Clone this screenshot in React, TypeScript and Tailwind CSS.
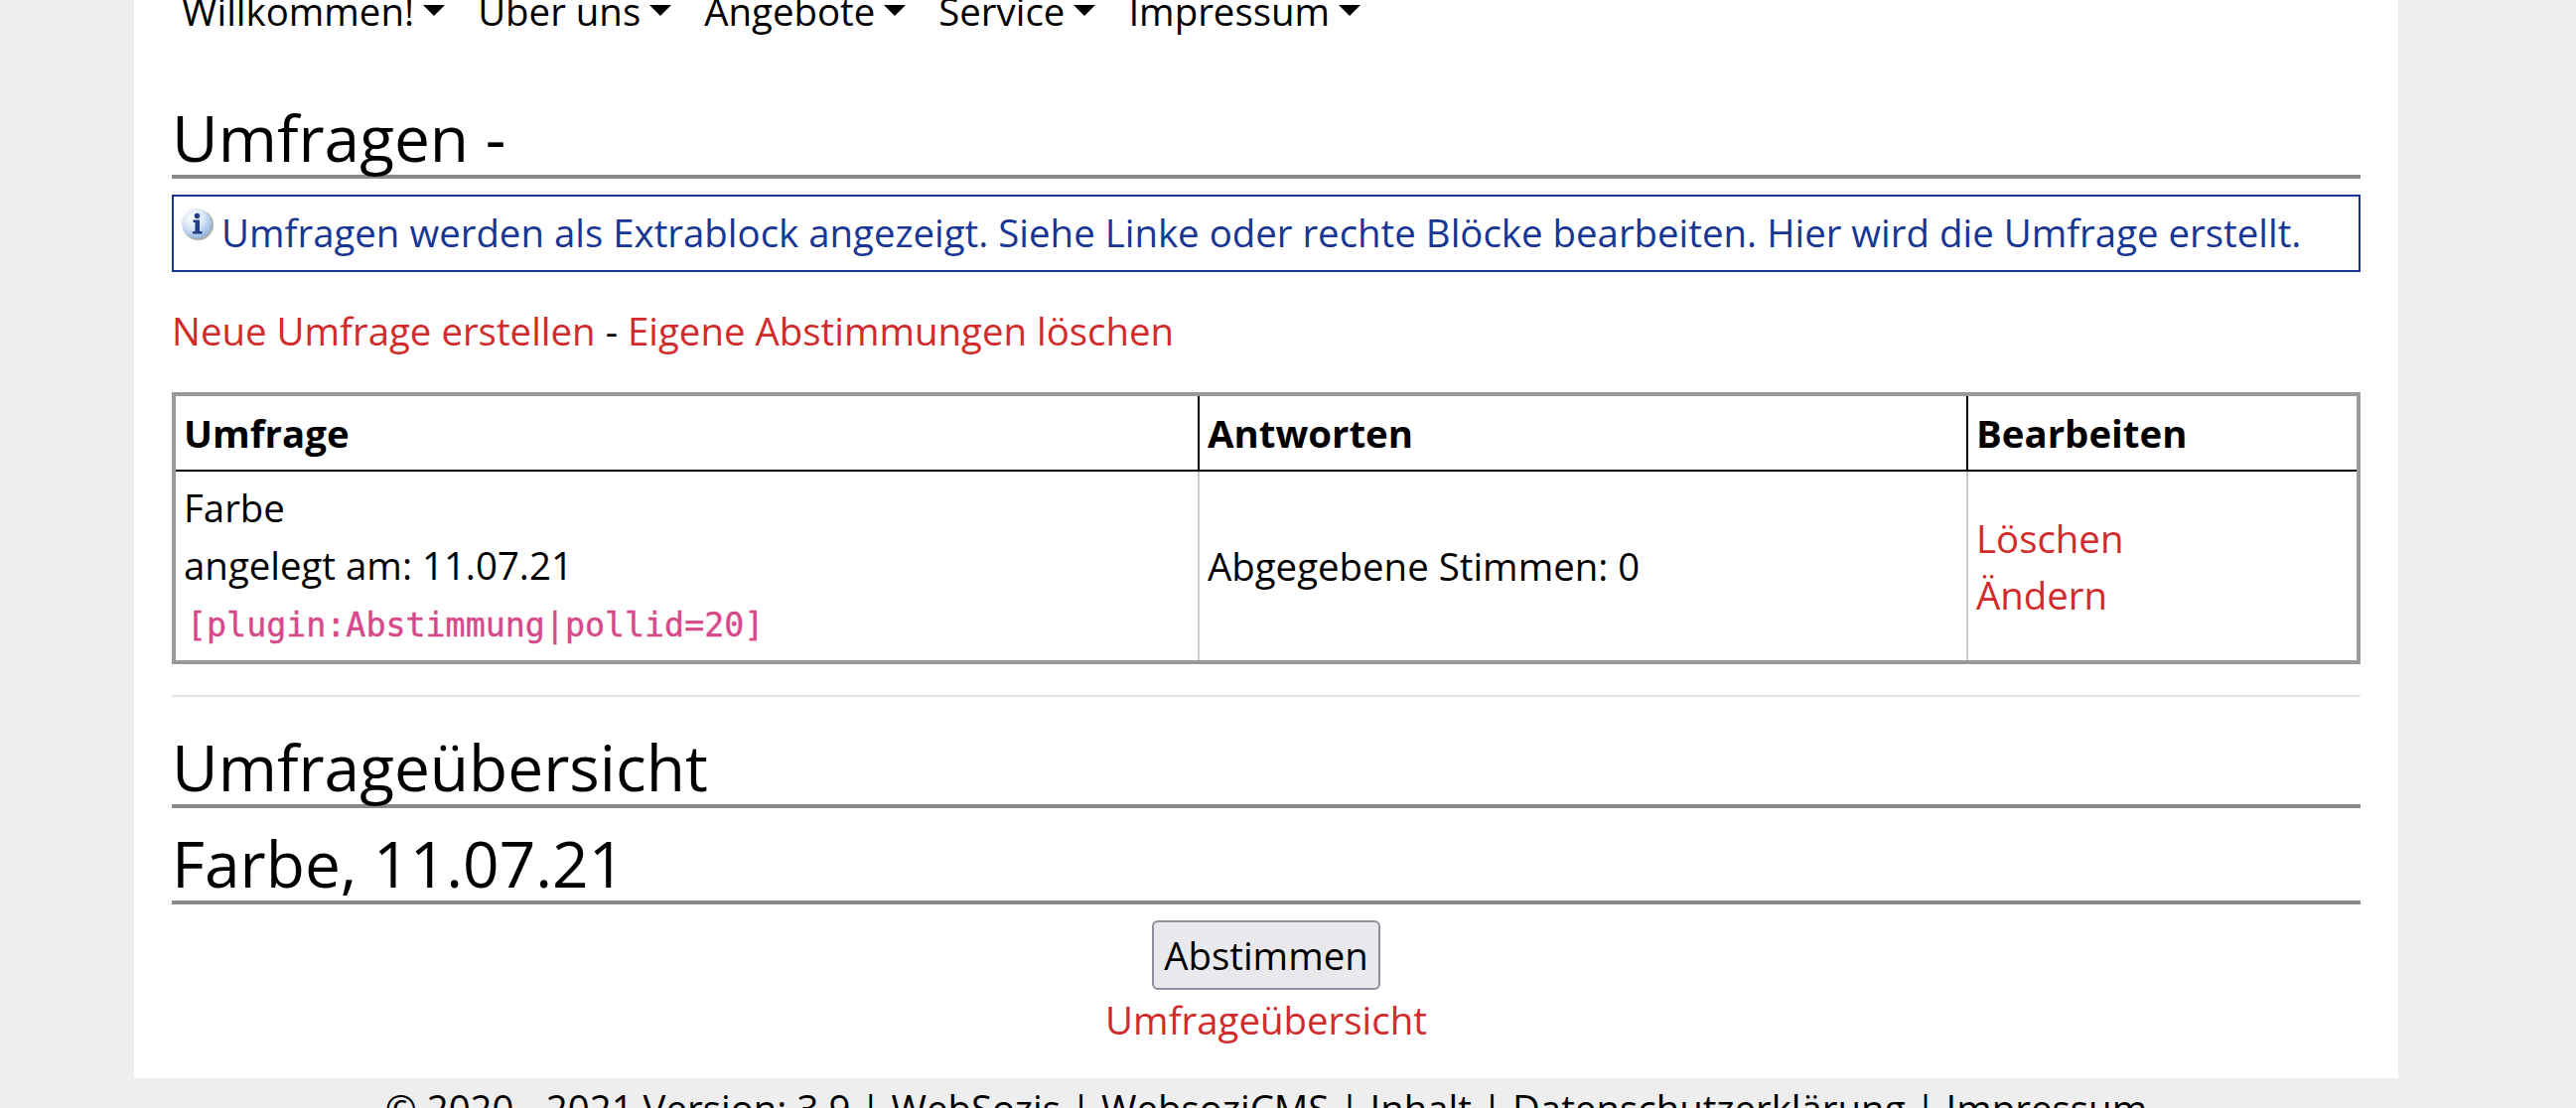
import React from "react";

const Caret = () => (
  <span className="inline-block ml-[9px] align-[10px] w-0 h-0 border-x-[11px] border-x-transparent border-t-[11px] border-t-black" />
);

const NavItem = ({ label }: { label: string }) => (
  <span className="whitespace-nowrap">
    {label}
    <Caret />
  </span>
);

const InfoIcon = () => (
  <svg width="32" height="32" viewBox="0 0 32 32" className="shrink-0">
    <defs>
      <radialGradient id="ball" cx="38%" cy="30%" r="75%">
        <stop offset="0%" stopColor="#ffffff" />
        <stop offset="50%" stopColor="#d8e6f7" />
        <stop offset="100%" stopColor="#8fb3e2" />
      </radialGradient>
    </defs>
    <circle cx="16.500" cy="16.500" r="15.500" fill="#9a9a9a" opacity="0.8" />
    <circle cx="15" cy="15" r="15" fill="url(#ball)" />
    <circle cx="15.500" cy="7.500" r="2.800" fill="#1f3f86" />
    <path d="M11.500 11.500h6.500v11.500h2.500v2.500h-9.500V23h2.500v-9h-2z" fill="#1f3f86" />
  </svg>
);

const Heading = ({ children, className }: { children: React.ReactNode; className: string }) => (
  <h2 className={`text-[64px] pt-[1px] leading-[75px] text-black border-b-4 border-[#8a8a8a] ${className}`}>{children}</h2>
);

const linkCls = "text-[#d12b2b]";

export default function App() {
  return (
    <div className="h-[1116px] overflow-hidden bg-[#eeeeee] text-black text-[38.4px] leading-[57.6px] font-['Open_Sans','Noto_Sans',sans-serif]">
      <div className="w-[2550px]">
        <div className="flow-root mx-auto w-[2280px] h-[1086px] bg-white px-[38px]">
          <nav className="flex gap-[33px] pl-[10px] -mt-[17px] h-[58px]">
            <NavItem label="Willkommen!" />
            <NavItem label="Über uns" />
            <NavItem label="Angebote" />
            <NavItem label="Service" />
            <NavItem label="Impressum" />
          </nav>
          <Heading className="mt-[59px]">Umfragen -</Heading>
          <div className="mt-[16px] h-[78px] border-2 border-[#183693] flex items-start text-[#183693] pl-[8px]">
            <span className="mt-[12px]"><InfoIcon /></span>
            <span className="ml-[8px] mt-[8px] whitespace-nowrap">Umfragen werden als Extrablock angezeigt. Siehe Linke oder rechte Blöcke bearbeiten. Hier wird die Umfrage erstellt.</span>
          </div>
          <p className="mt-[31px]">
            <a className={linkCls}>Neue Umfrage erstellen</a> - <a className={linkCls}>Eigene Abstimmungen löschen</a>
          </p>
          <table className="mt-[32px] w-full h-[274px] table-fixed border-separate border-spacing-0 border-4 border-[#999999]">
            <colgroup>
              <col className="w-[1031px]" />
              <col className="w-[774px]" />
              <col />
            </colgroup>
            <thead>
              <tr className="h-[76px] text-left">
                <th className="border-r-2 border-b-2 border-black pl-[8px] pt-[2px] font-bold">Umfrage</th>
                <th className="border-r-2 border-b-2 border-black pl-[8px] pt-[2px] font-bold">Antworten</th>
                <th className="border-b-2 border-black pl-[8px] pt-[2px] font-bold">Bearbeiten</th>
              </tr>
            </thead>
            <tbody>
              <tr>
                <td className="border-r-2 border-[#cccccc] pl-[8px] pt-[3px]">
                  <div>Farbe</div>
                  <div>angelegt am: 11.07.21</div>
                  <div><code className="text-[#d6488a] [-webkit-text-stroke:0.4px] text-[33.3px] pl-[3px] font-['DejaVu_Sans_Mono',monospace]">[plugin:Abstimmung|pollid=20]</code></div>
                </td>
                <td className="border-r-2 border-[#cccccc] pl-[8px] pt-[3px]">Abgegebene Stimmen: 0</td>
                <td className="pl-[8px] pt-[3px]">
                  <a className={`block ${linkCls}`}>Löschen</a>
                  <a className={`block ${linkCls}`}>Ändern</a>
                </td>
              </tr>
            </tbody>
          </table>
          <hr className="mt-[31px] border-t-2 border-[#e5e5e5]" />
          <Heading className="mt-[32px]">Umfrageübersicht</Heading>
          <Heading className="mt-[17px]">Farbe, 11.07.21</Heading>
          <div className="flex flex-col items-center">
            <button className="mt-[16px] w-[230px] h-[70px] rounded-[6px] border-2 border-[#8f8f9d] bg-[#e9e9ed] pt-[2px] text-[38.4px]">Abstimmen</button>
            <a className={`mt-[2px] ${linkCls}`}>Umfrageübersicht</a>
          </div>
        </div>
        <footer className="pt-[2px] text-center whitespace-nowrap">© 2020 - 2021 Version: 3.9 | WebSozis | WebsoziCMS | Inhalt | Datenschutzerklärung | Impressum</footer>
      </div>
    </div>
  );
}
